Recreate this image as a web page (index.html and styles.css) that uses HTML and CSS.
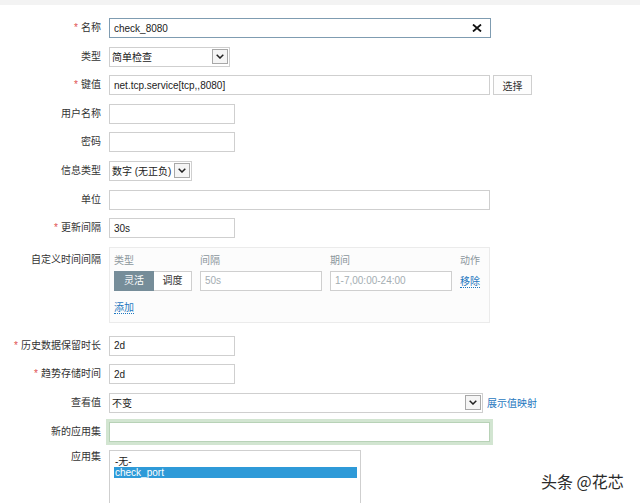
FILE: index.html
```html
<!DOCTYPE html>
<html lang="zh">

<head>
    <meta charset="UTF-8">
    <title>监控项</title>
    <link rel="stylesheet" href="styles.css">
</head>

<body>
    <!-- 顶部条 -->
    <div class="topBar"></div>

    <div class="itemForm">
        <!-- 名称 -->
        <div class="formRow">
            <label class="formLabel"><span class="req">*</span>名称</label>
            <div class="nameWrap">
                <input class="textBox wide focused" value="check_8080">
                <span class="clearBtn">
                    <svg width="10" height="8" viewBox="0 0 10 8"><path d="M1 0.5L9 7.5M9 0.5L1 7.5" stroke="#111" stroke-width="1.8" fill="none"/></svg>
                </span>
            </div>
        </div>
        <!-- 类型 -->
        <div class="formRow">
            <label class="formLabel">类型</label>
            <div class="selectBox typeSel"><span class="selVal">简单检查</span><span class="selArrow"><svg width="8" height="5" viewBox="0 0 8 5"><path d="M0.7 0.7L4 4L7.3 0.7" stroke="#222" stroke-width="1.5" fill="none"/></svg></span></div>
        </div>
        <!-- 键值 -->
        <div class="formRow">
            <label class="formLabel"><span class="req">*</span>键值</label>
            <input class="textBox wide" value="net.tcp.service[tcp,,8080]">
            <button class="pickBtn">选择</button>
        </div>
        <div class="formRow">
            <label class="formLabel">用户名称</label>
            <input class="textBox small" value="">
        </div>
        <div class="formRow">
            <label class="formLabel">密码</label>
            <input class="textBox small" value="">
        </div>
        <div class="formRow">
            <label class="formLabel">信息类型</label>
            <div class="selectBox infoSel"><span class="selVal">数字 (无正负)</span><span class="selArrow"><svg width="8" height="5" viewBox="0 0 8 5"><path d="M0.7 0.7L4 4L7.3 0.7" stroke="#222" stroke-width="1.5" fill="none"/></svg></span></div>
        </div>
        <div class="formRow">
            <label class="formLabel">单位</label>
            <input class="textBox wide" value="">
        </div>
        <div class="formRow">
            <label class="formLabel"><span class="req">*</span>更新间隔</label>
            <input class="textBox small" value="30s">
        </div>
        <!-- 自定义时间间隔 -->
        <div class="formRow top intervalRow">
            <label class="formLabel padTop">自定义时间间隔</label>
            <div class="intervalBox">
                <div class="intGrid">
                    <div class="intHead">类型</div>
                    <div class="intHead">间隔</div>
                    <div class="intHead">期间</div>
                    <div class="intHead">动作</div>
                    <div class="segGroup">
                        <span class="segBtn active">灵活</span><span class="segBtn">调度</span>
                    </div>
                    <input class="textBox intInput" placeholder="50s">
                    <input class="textBox intInput" placeholder="1-7,00:00-24:00">
                    <div><a class="link">移除</a></div>
                </div>
                <div class="addLine"><a class="link">添加</a></div>
            </div>
        </div>
        <div class="formRow">
            <label class="formLabel"><span class="req">*</span>历史数据保留时长</label>
            <input class="textBox small" value="2d">
        </div>
        <div class="formRow">
            <label class="formLabel"><span class="req">*</span>趋势存储时间</label>
            <input class="textBox small" value="2d">
        </div>
        <div class="formRow">
            <label class="formLabel">查看值</label>
            <div class="selectBox valueSel"><span class="selVal">不变</span><span class="selArrow"><svg width="8" height="5" viewBox="0 0 8 5"><path d="M0.7 0.7L4 4L7.3 0.7" stroke="#222" stroke-width="1.5" fill="none"/></svg></span></div>
            <a class="link mapLink">展示值映射</a>
        </div>
        <div class="formRow">
            <label class="formLabel">新的应用集</label>
            <input class="textBox wide newApp" value="">
        </div>
        <div class="formRow top">
            <label class="formLabel shortLine">应用集</label>
            <div class="listBox">
                <div class="listItem">-无-</div>
                <div class="listItem selected">check_port</div>
            </div>
        </div>
    </div>

    <!-- 水印 -->
    <div class="watermark">头条 @花芯</div>
</body>

</html>
```

FILE: styles.css
```css
* {
    margin: 0;
    padding: 0;
    box-sizing: border-box;
}

body {
    font-family: "Liberation Sans", "Noto Sans CJK SC", sans-serif;
    font-size: 10px;
    color: #222;
    background: #fff;
    overflow: hidden;
}

.topBar {
    height: 5px;
    background: #f3f3f3;
}

.itemForm {
    display: flex;
    flex-direction: column;
    gap: 8.6px;
    padding-top: 13px;
}

.formRow {
    display: flex;
    align-items: center;
}

.formRow.top {
    align-items: flex-start;
}

.intervalRow {
    margin-bottom: 4.4px;
}

.formLabel {
    flex: none;
    width: 101px;
    margin-right: 8px;
    text-align: right;
    line-height: 20px;
    color: #333;
}

.formLabel.padTop {
    padding-top: 3px;
}

.formLabel.shortLine {
    line-height: 14px;
}

.req {
    color: #e0504f;
    margin-right: 3px;
}

.textBox {
    height: 20px;
    border: 1px solid #cfcfcf;
    padding: 0 4px;
    font: inherit;
    color: #222;
    background: #fff;
    outline: none;
}

.textBox::placeholder {
    color: #a4adb2;
}

.textBox.wide {
    width: 381px;
}

.textBox.small {
    width: 126px;
}

.textBox.focused {
    width: 382px;
    border-color: #7f9cb1;
}

.nameWrap {
    position: relative;
    display: flex;
}

.clearBtn {
    position: absolute;
    right: 9px;
    top: 6px;
    display: flex;
}

.pickBtn {
    width: 39px;
    height: 20px;
    margin-left: 3px;
    border: 1px solid #cfcfcf;
    background: #fdfdfd;
    font: inherit;
    color: #333;
}

.selectBox {
    display: flex;
    align-items: center;
    height: 20px;
    border: 1px solid #cfcfcf;
    padding: 0 1px 0 2px;
    background: #fff;
}

.selVal {
    flex: 1;
    white-space: nowrap;
}

.selArrow {
    width: 16px;
    height: 15px;
    border: 1px solid #a8a8a8;
    background: #f5f5f5;
    display: flex;
    align-items: center;
    justify-content: center;
}

.typeSel {
    width: 121px;
}

.infoSel {
    width: 83px;
}

.valueSel {
    width: 374px;
}

.link {
    color: #1f78c0;
    border-bottom: 1px dotted #1f78c0;
    cursor: pointer;
}

.mapLink {
    margin-left: 4px;
    border-bottom: none;
}

/* 自定义时间间隔 */
.intervalBox {
    width: 381px;
    height: 76px;
    border: 1px solid #ebebeb;
    background: #fcfcfc;
    padding: 6px 4px 7px;
}

.intGrid {
    display: grid;
    grid-template-columns: 78px 122px 122px 1fr;
    grid-template-rows: 14px 20px;
    column-gap: 8px;
    row-gap: 3px;
    align-items: center;
}

.intHead {
    color: #8c979d;
    line-height: 14px;
}

.segGroup {
    display: flex;
}

.segBtn {
    width: 40px;
    height: 20px;
    line-height: 18px;
    text-align: center;
    border: 1px solid #cfcfcf;
    background: #fff;
    color: #333;
}

.segBtn + .segBtn {
    width: 38px;
    border-left: none;
}

.segBtn.active {
    background: #768d99;
    border-color: #768d99;
    color: #fff;
}

.intInput {
    width: 122px;
}

.addLine {
    margin-top: 10px;
    line-height: 14px;
}

.newApp {
    border-color: #b8d2b7;
    box-shadow: 0 0 0 3px #d2e5d1;
}

.listBox {
    width: 252px;
    height: 60px;
    border: 1px solid #cfcfcf;
    padding: 5px 3px 0 4px;
    background: #fff;
}

.listItem {
    line-height: 11px;
    padding-left: 1px;
}

.listItem.selected {
    background: #2e9ad8;
    color: #fff;
}

.watermark {
    position: absolute;
    left: 541px;
    top: 473px;
    font-family: "Noto Sans CJK SC", sans-serif;
    font-size: 16px;
    line-height: 16px;
    color: #2b2b2b;
    text-shadow: 0 0 2px #fff;
}
```
